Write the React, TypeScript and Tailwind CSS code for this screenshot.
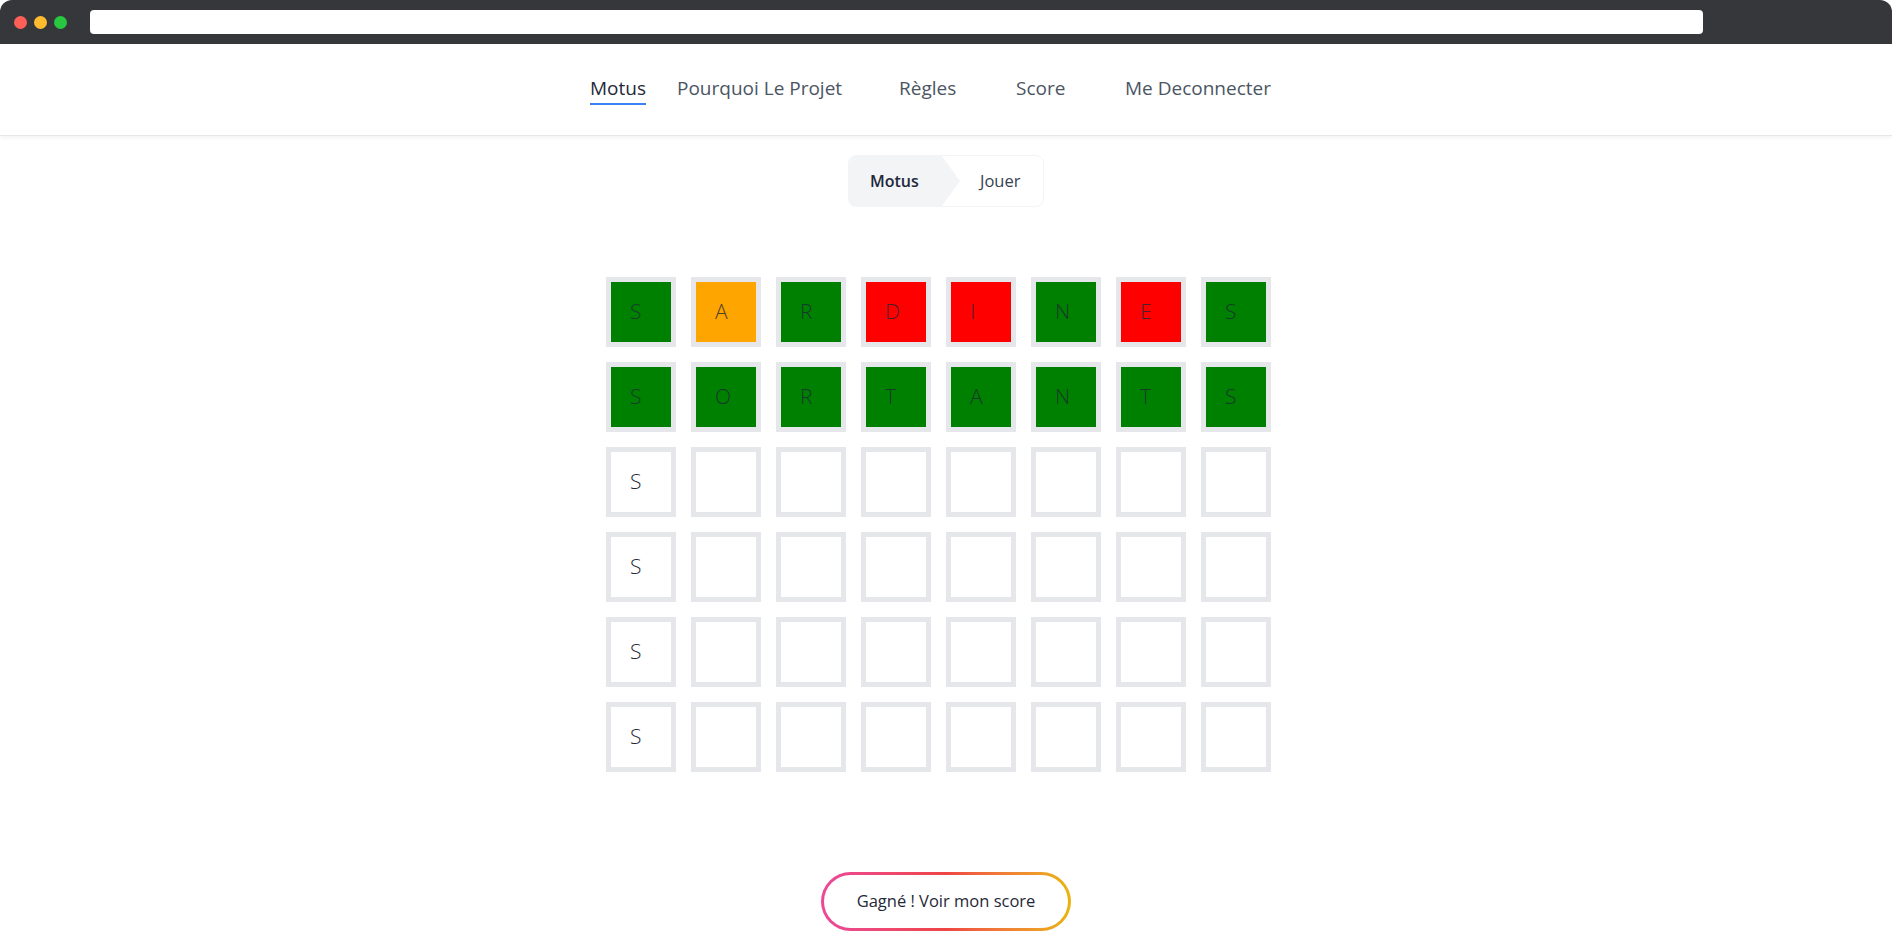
import React from "react";

type Tile = { letter: string; color: "green" | "orange" | "red" | "empty" };

const NAV = [
  { label: "Motus", width: "w-[87px]", active: true },
  { label: "Pourquoi Le Projet", width: "w-[222px]", active: false },
  { label: "Règles", width: "w-[117px]", active: false },
  { label: "Score", width: "w-[109px]", active: false },
  { label: "Me Deconnecter", width: "w-[160px]", active: false },
];

const row = (word: string, colors: string): Tile[] =>
  word.split("").map((l, i) => ({
    letter: l,
    color: colors[i] === "g" ? "green" : colors[i] === "o" ? "orange" : colors[i] === "r" ? "red" : "empty",
  }));

const emptyRow = (): Tile[] =>
  Array.from({ length: 8 }, (_, i) => ({ letter: i === 0 ? "S" : "", color: "empty" as const }));

const BOARD: Tile[][] = [
  row("SARDINES", "gogrrgrg"),
  row("SORTANTS", "gggggggg"),
  emptyRow(),
  emptyRow(),
  emptyRow(),
  emptyRow(),
];

const tileBg = {
  green: "bg-[#008000]",
  orange: "bg-[#ffa500]",
  red: "bg-[#ff0000]",
  empty: "bg-white",
};

const BrowserBar = () => (
  <div className="flex h-[44px] items-center rounded-t-[12px] bg-[#36373a] pl-[14px]">
    <div className="flex gap-[7px]">
      <span className="size-[13px] rounded-full bg-[#fe5f57]" />
      <span className="size-[13px] rounded-full bg-[#febc2e]" />
      <span className="size-[13px] rounded-full bg-[#28c840]" />
    </div>
    <div className="ml-[23px] h-[24px] w-[1613px] rounded-[4px] bg-white" />
  </div>
);

const Header = () => (
  <header className="h-[92px] border-b border-[#e5e7eb] bg-white shadow-[0_2px_4px_rgba(0,0,0,0.05)]">
    <nav className="flex pl-[590px] pt-[30px] text-[19px] leading-[28px]">
      {NAV.map((item) => (
        <div key={item.label} className={item.width}>
          <a
            className={
              item.active
                ? "inline-block border-b-2 border-[#3b82f6] pb-px text-[#1f2937]"
                : "inline-block text-[#4b5563]"
            }
          >
            {item.label}
          </a>
        </div>
      ))}
    </nav>
  </header>
);

const Breadcrumb = () => (
  <div className="mt-[19px] flex justify-center">
    <div className="flex h-[52px] items-stretch overflow-hidden rounded-[8px] border border-[#f3f4f6] text-[16px]">
      <div className="flex w-[93px] items-center bg-[#f3f4f6] pl-[21px] font-semibold text-[#1e293b]">Motus</div>
      <div className="h-0 w-0 self-center border-y-[25px] border-l-[18px] border-y-transparent border-l-[#f3f4f6]" />
      <div className="flex w-[83px] items-center pl-[20px] text-[16.5px] font-medium text-[#374151]">Jouer</div>
    </div>
  </div>
);

const Board = () => (
  <div className="mt-[70px] flex flex-col items-center gap-[15px]">
    {BOARD.map((r, ri) => (
      <div key={ri} className="flex pr-[15px]">
        {r.map((t, ti) => (
          <div
            key={ti}
            className={`mr-[15px] last:mr-0 flex size-[70px] items-center border-[5px] border-[#e5e7eb] pl-[19px] text-[21px] font-light ${tileBg[t.color]}`}
          >
            <span className={t.color === "empty" ? "text-[#1f2937]" : "text-[#1f2937] opacity-80"}>{t.letter}</span>
          </div>
        ))}
      </div>
    ))}
  </div>
);

export default function App() {
  return (
    <div className="h-[947px] w-[1892px] overflow-hidden bg-white [font-family:'Open_Sans','Noto_Sans',sans-serif]">
      <BrowserBar />
      <Header />
      <Breadcrumb />
      <Board />
      <div className="mt-[100px] flex justify-center">
        <button className="h-[59px] w-[250px] rounded-full bg-gradient-to-r from-[#ec4899] via-[#ef4444] to-[#eab308] p-[3px]">
          <span className="flex h-full w-full items-center justify-center rounded-full bg-white text-[16.5px] font-medium text-[#1f2937]">
            Gagné ! Voir mon score
          </span>
        </button>
      </div>
    </div>
  );
}
